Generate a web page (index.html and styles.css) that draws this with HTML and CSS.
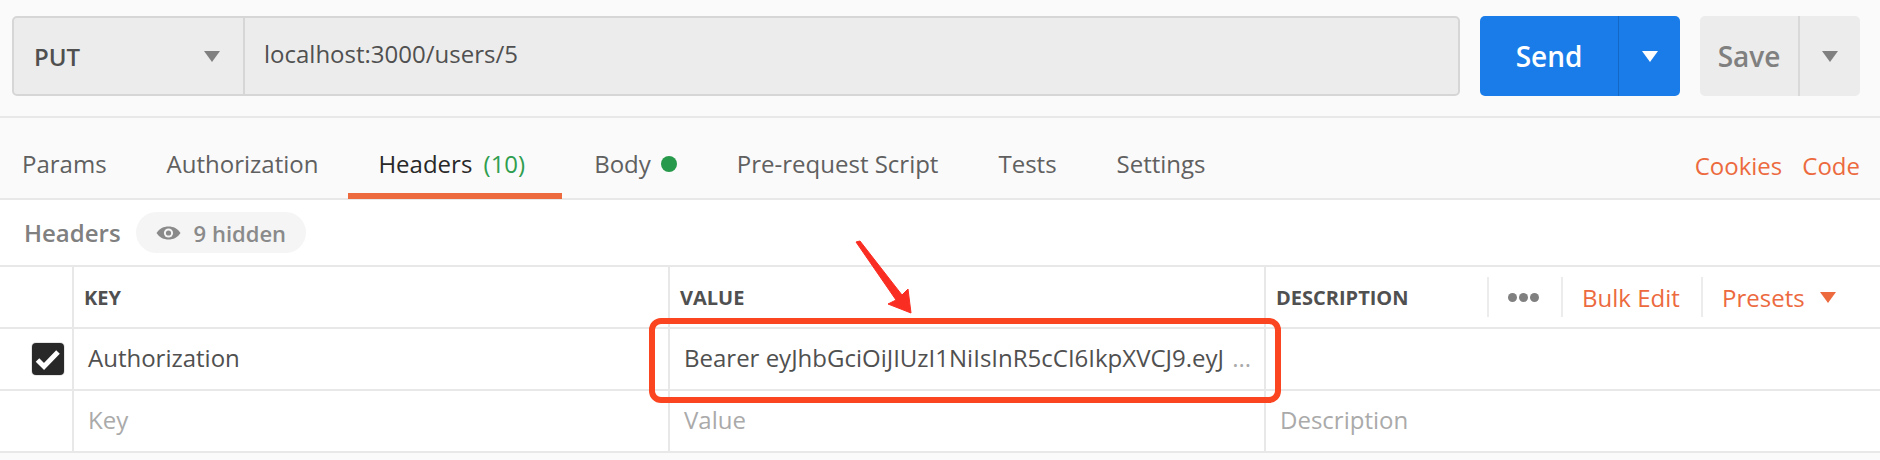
FILE: index.html
```html
<!DOCTYPE html>
<html lang="en">
  <head>
    <meta charset="UTF-8" />
    <title>PUT localhost:3000/users/5</title>
    <link rel="stylesheet" href="styles.css">
  </head>
  <body>
    <div class="page">
      <div class="request-bar">
        <div class="url-box">
          <div class="method">
            <span>PUT</span>
            <i class="caret caret-grey"></i>
          </div>
          <div class="url">localhost:3000/users/5</div>
        </div>
        <div class="split-btn send-btn">
          <div class="btn-label">Send</div>
          <div class="btn-drop"><i class="caret caret-white"></i></div>
        </div>
        <div class="split-btn save-btn">
          <div class="btn-label">Save</div>
          <div class="btn-drop"><i class="caret caret-grey"></i></div>
        </div>
      </div>

      <div class="tabs">
        <div class="tab tab-params">Params</div>
        <div class="tab tab-auth">Authorization</div>
        <div class="tab tab-headers">Headers <span class="count">(10)</span></div>
        <div class="tab tab-body">Body <i class="dot"></i></div>
        <div class="tab tab-pre">Pre-request Script</div>
        <div class="tab tab-tests">Tests</div>
        <div class="tab">Settings</div>
        <div class="tab-links">
          <span>Cookies</span>
          <span>Code</span>
        </div>
      </div>

      <div class="sub-head">
        <span class="sub-title">Headers</span>
        <div class="hidden-pill">
          <svg class="eye" width="25" height="14" viewBox="0 0 24 14">
            <path d="M0 7C3 2.500 7 .5 12 .5s9 2 12 6.500c-3 4.500-7 6.500-12 6.500S3 11.500 0 7z" fill="#8a8a8a" />
            <circle cx="12" cy="7" r="4.600" fill="#f5f5f5" />
            <circle cx="12" cy="7" r="2.600" fill="#8a8a8a" />
          </svg>
          <span>9 hidden</span>
        </div>
      </div>

      <div class="table">
        <div class="row head-row">
          <div class="cell check-cell"></div>
          <div class="cell">KEY</div>
          <div class="cell">VALUE</div>
          <div class="cell desc-head">
            <span>DESCRIPTION</span>
            <div class="head-tools">
              <div class="tool tool-dots"><i></i><i></i><i></i></div>
              <div class="tool tool-bulk">Bulk Edit</div>
              <div class="tool tool-presets">Presets <i class="caret caret-orange"></i></div>
            </div>
          </div>
        </div>
        <div class="row">
          <div class="cell check-cell">
            <div class="checkbox">
              <svg width="32" height="32" viewBox="0 0 32 32">
                <path d="M5.500 17L12 23.500L26 9" fill="none" stroke="#fff" stroke-width="5" />
              </svg>
            </div>
          </div>
          <div class="cell body-cell key-cell">Authorization</div>
          <div class="cell body-cell">Bearer eyJhbGciOiJIUzI1NiIsInR5cCI6IkpXVCJ9.eyJ <span class="more">...</span></div>
          <div class="cell body-cell"></div>
        </div>
        <div class="row">
          <div class="cell check-cell"></div>
          <div class="cell body-cell key-cell empty">Key</div>
          <div class="cell body-cell empty">Value</div>
          <div class="cell body-cell empty">Description</div>
        </div>
      </div>

      <div class="callout"></div>
      <svg class="arrow" width="70" height="90" viewBox="0 0 70 90">
        <path d="M4 2L8 1L50 55L56 49L59 73L36 64L44 60z" fill="#fa2d22" stroke="#fa2d22" stroke-linejoin="round" />
      </svg>
    </div>
  </body>
</html>
```

FILE: styles.css
```css
* {
  padding: 0;
  margin: 0;
  box-sizing: border-box;
}
html,
body {
  width: 1880px;
  height: 460px;
  overflow: hidden;
  font-family: "Open Sans", sans-serif;
  font-size: 24px;
  color: #505050;
  background-color: #fafafa;
}

.page {
  position: relative;
  height: 460px;
}

/* request bar */
.request-bar {
  display: flex;
  height: 118px;
  padding: 16px 20px 0 12px;
  border-bottom: 2px solid #e8e8e8;
}
.url-box {
  display: flex;
  width: 1448px;
  height: 80px;
  background-color: #ececec;
  border: 2px solid #d6d6d6;
  border-radius: 5px;
}
.method {
  display: flex;
  align-items: center;
  justify-content: space-between;
  width: 231px;
  padding: 0 23px 0 20px;
  border-right: 2px solid #d6d6d6;
  font-weight: 600;
  color: #505050;
}
.url {
  padding: 21px 0 0 19px;
  line-height: 30px;
}

.caret {
  display: block;
  width: 0;
  height: 0;
  border-left: 8px solid transparent;
  border-right: 8px solid transparent;
  border-top: 11px solid #808080;
}
.caret-white {
  border-top-color: #fff;
}
.caret-orange {
  border-top-color: #ec6a3e;
}

.split-btn {
  display: flex;
  height: 80px;
  border-radius: 5px;
  font-size: 28px;
  font-weight: 600;
  line-height: 80px;
}
.btn-label {
  text-align: center;
}
.btn-drop {
  display: flex;
  align-items: center;
  justify-content: center;
}
.send-btn {
  width: 200px;
  margin-left: 20px;
  background-color: #1a7ce8;
  color: #fff;
}
.send-btn .btn-label {
  width: 138px;
}
.send-btn .btn-drop {
  width: 62px;
  border-left: 1px solid #1467c4;
}
.save-btn {
  width: 160px;
  margin-left: 20px;
  background-color: #ececec;
  color: #808080;
}
.save-btn .btn-label {
  width: 98px;
}
.save-btn .btn-drop {
  width: 62px;
  border-left: 2px solid #d9d9d9;
}

/* tabs */
.tabs {
  display: flex;
  height: 82px;
  padding: 27px 20px 0 22px;
  border-bottom: 2px solid #e8e8e8;
  line-height: 38px;
}
.tab {
  color: #606060;
  margin-right: 60px;
}
.tab-headers {
  position: relative;
  margin-right: 69px;
  color: #282828;
}
.tab-headers::after {
  content: "";
  position: absolute;
  left: -30px;
  right: -37px;
  top: 48px;
  height: 6px;
  background-color: #ec6a3e;
}
.count {
  margin-left: 5px;
  color: #2f9e4f;
}
.tab-body {
  display: flex;
  align-items: center;
  gap: 10px;
  height: 38px;
}
.dot {
  display: block;
  width: 16px;
  height: 16px;
  border-radius: 50%;
  background-color: #26994a;
}
.tab-links {
  display: flex;
  gap: 20px;
  margin-left: auto;
  padding-top: 2px;
  color: #ec6a3e;
}

/* sub head */
.sub-head {
  display: flex;
  align-items: center;
  height: 65px;
  padding: 0 0 0 24px;
  background-color: #fff;
}
.sub-title {
  font-weight: 600;
  color: #808080;
}
.hidden-pill {
  display: flex;
  align-items: center;
  gap: 13px;
  height: 41px;
  margin-left: 15px;
  padding: 0 20px;
  border-radius: 21px;
  background-color: #f5f5f5;
  font-size: 22px;
  font-weight: 600;
  color: #8a8a8a;
}

/* table */
.table {
  background-color: #fff;
  border-top: 2px solid #e8e8e8;
}
.row {
  display: grid;
  grid-template-columns: 74px 596px 596px 1fr;
  height: 62px;
  border-bottom: 2px solid #e8e8e8;
}
.cell {
  display: flex;
  align-items: center;
  padding-left: 10px;
  border-right: 2px solid #e8e8e8;
  font-size: 20px;
  font-weight: 700;
}
.cell:last-child {
  border-right: none;
}
.check-cell {
  padding-left: 32px;
}
.body-cell {
  display: block;
  padding-left: 14px;
  font-size: 24px;
  font-weight: 400;
  line-height: 58px;
  white-space: nowrap;
  overflow: hidden;
}
.empty {
  color: #aaa;
}
.more {
  margin-left: 2px;
  color: #aaa;
}
.checkbox {
  width: 32px;
  height: 32px;
  border-radius: 4px;
  background-color: #282828;
  box-shadow: 0 0 0 1px #e6e6e6;
}

.desc-head {
  justify-content: space-between;
  padding-right: 0;
}
.head-tools {
  display: flex;
  align-items: center;
  width: 393px;
  height: 42px;
  font-size: 24px;
  font-weight: 400;
  color: #ec6a3e;
}
.tool {
  display: flex;
  align-items: center;
  height: 40px;
  border-left: 2px solid #ececec;
}
.tool-dots {
  gap: 2px;
  width: 74px;
  padding-left: 19px;
}
.tool-dots i {
  display: block;
  width: 9px;
  height: 9px;
  border-radius: 50%;
  background-color: #808080;
}
.tool-bulk {
  width: 140px;
  padding-left: 19px;
}
.tool-presets {
  gap: 15px;
  padding-left: 19px;
}

/* annotation drawn on top of the screenshot */
.callout {
  position: absolute;
  left: 649px;
  top: 318px;
  width: 632px;
  height: 85px;
  border: 6px solid #fb4420;
  border-radius: 12px;
}
.arrow {
  position: absolute;
  left: 852px;
  top: 240px;
}
```
